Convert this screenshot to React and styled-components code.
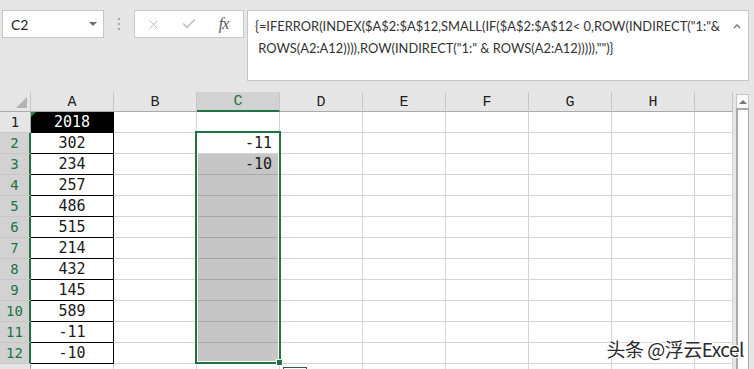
import React from "react"
import styled, { createGlobalStyle } from "styled-components"
import { X, Check } from "lucide-react"

const green = "#217346"

const GlobalStyle = createGlobalStyle`
  html, body {
    margin: 0;
    padding: 0;
    background: #e6e6e6;
    overflow: hidden;
  }
`

const Page = styled.div`
  position: relative;
  width: 754px;
  height: 369px;
  overflow: hidden;
  background: #e6e6e6;
  font-family: "Liberation Sans", sans-serif;
`

// ---- formula bar ----

const FormulaBar = styled.div`
  display: flex;
  align-items: flex-start;
  height: 92px;
  padding: 10px 5px 0 2px;
  box-sizing: border-box;
`

const NameBox = styled.div`
  flex-shrink: 0;
  width: 102px;
  height: 28px;
  box-sizing: border-box;
  border: 1px solid #c6c6c6;
  background: #fff;
  display: flex;
  align-items: center;
  justify-content: space-between;
  padding: 0 6px 0 8px;
  font: 14px Lato, sans-serif;
  color: #222;
`

const DropArrow = styled.span`
  width: 0;
  height: 0;
  border-left: 4px solid transparent;
  border-right: 4px solid transparent;
  border-top: 4px solid #6d6d6d;
`

const Grip = styled.div`
  flex-shrink: 0;
  width: 30px;
  height: 28px;
  display: flex;
  flex-direction: column;
  align-items: center;
  justify-content: center;
  gap: 3px;
`

const Dot = styled.span`
  width: 2px;
  height: 2px;
  background: #a6a6a6;
`

const ButtonBox = styled.div`
  flex-shrink: 0;
  width: 110px;
  height: 28px;
  box-sizing: border-box;
  border: 1px solid #c6c6c6;
  background: #fff;
  display: flex;
  align-items: center;
  padding-left: 1px;
`

const BarButton = styled.span`
  width: 35px;
  display: flex;
  align-items: center;
  justify-content: center;
  color: ${p => p.$color || "#b4b4b4"};
`

const Fx = styled.span`
  font: italic 16px "Liberation Serif", serif;
  color: #555;
  letter-spacing: -1px;
`

const FormulaBox = styled.div`
  margin-left: 3px;
  flex: 1;
  min-width: 0;
  height: 71px;
  box-sizing: border-box;
  border: 1px solid #c6c6c6;
  background: #fff;
  display: flex;
  padding: 4px 7px 0 7px;
`

const FormulaText = styled.div`
  flex: 1;
  min-width: 0;
  font: 12.9px Lato, sans-serif;
  color: #333;
  line-height: 22px;
`

const FormulaLine = styled.div`
  white-space: pre;
`

const Collapse = styled.span`
  padding-top: 8px;
  color: #777;
  display: flex;
`

// ---- sheet ----

const Sheet = styled.div`
  display: flex;
`

const Grid = styled.div`
  position: relative;
  flex-shrink: 0;
  display: grid;
  grid-template-columns: 31px repeat(8, 83px) 38px;
  grid-template-rows: 20px repeat(13, 21px);
  background: #fff;
`

const Corner = styled.div`
  background: #e6e6e6;
  border-right: 1px solid #c6c6c6;
  border-bottom: 1px solid #ababab;
  position: relative;

  &::after {
    content: "";
    position: absolute;
    right: 3px;
    bottom: 3px;
    border-left: 11px solid transparent;
    border-bottom: 11px solid #b4b4b4;
  }
`

const ColHead = styled.div`
  display: flex;
  align-items: center;
  justify-content: center;
  background: ${p => (p.$active ? "#d2d2d2" : "#e6e6e6")};
  color: ${p => (p.$active ? green : "#222")};
  border-right: 1px solid #c6c6c6;
  border-bottom: ${p => (p.$active ? `2px solid ${green}` : "1px solid #ababab")};
  font: 15px "Liberation Mono", monospace;
  padding-top: 1px;
`

const RowHead = styled.div`
  display: flex;
  align-items: center;
  justify-content: center;
  background: ${p => (p.$active ? "#d2d2d2" : "#e6e6e6")};
  color: ${p => (p.$active ? green : "#222")};
  border-right: ${p => (p.$active ? `2px solid ${green}` : "1px solid #ababab")};
  border-bottom: 1px solid #c6c6c6;
  font: 14px "DejaVu Sans Mono", monospace;
`

const Cell = styled.div`
  position: relative;
  display: flex;
  align-items: center;
  justify-content: ${p => (p.$right ? "flex-end" : "center")};
  padding-right: ${p => (p.$right ? "7px" : "0")};
  background: ${p => (p.$dark ? "#000" : p.$sel ? "#c6c6c6" : "#fff")};
  color: ${p => (p.$dark ? "#fff" : "#1a1a1a")};
  border-right: 1px solid ${p => (p.$boxed ? "#000" : "#d4d4d4")};
  border-bottom: 1px solid ${p => (p.$boxed ? "#000" : p.$sel ? "#a6a6a6" : "#d4d4d4")};
  font: 15px "DejaVu Sans Mono", monospace;

  ${p =>
    p.$flag &&
    `&::before {
      content: "";
      position: absolute;
      left: 0;
      top: 0;
      border-top: 5px solid #1f8a4c;
      border-right: 5px solid transparent;
    }`}
`

const Selection = styled.div`
  position: absolute;
  left: 195px;
  top: 39px;
  width: 86px;
  height: 233px;
  box-sizing: border-box;
  border: 2px solid ${green};
  box-shadow: inset 0 0 0 1px #fff;
  pointer-events: none;
`

const FillHandle = styled.div`
  position: absolute;
  left: 276px;
  top: 267px;
  width: 7px;
  height: 7px;
  box-sizing: border-box;
  background: ${green};
  border: 1px solid #fff;
`

const PasteTag = styled.div`
  position: absolute;
  left: 283px;
  top: 275px;
  width: 24px;
  height: 12px;
  box-sizing: border-box;
  border: 1px solid #2d5f44;
  background: #fff;
`

const ScrollBar = styled.div`
  flex-shrink: 0;
  width: 21px;
  padding: 2px 4px 0 3px;
  box-sizing: border-box;
  display: flex;
  flex-direction: column;
  border-left: 1px solid #ababab;
  margin-left: -1px;
`

const ArrowBtn = styled.div`
  height: 14px;
  box-sizing: border-box;
  border: 1px solid #c6c6c6;
  border-bottom: none;
  background: #fafafa;
  display: flex;
  align-items: center;
  justify-content: center;

  &::after {
    content: "";
    border-left: 4px solid transparent;
    border-right: 4px solid transparent;
    border-bottom: 4px solid #777;
  }
`

const Thumb = styled.div`
  height: 300px;
  box-sizing: border-box;
  border: 1px solid #ababab;
  border-top: 2px solid #ababab;
  border-left: 2px solid #ababab;
  background: #fff;
`

const Watermark = styled.div`
  position: absolute;
  right: 10px;
  top: 335px;
  font: 19px "Noto Sans CJK SC", sans-serif;
  color: #2b2b2b;
  letter-spacing: -0.5px;
  text-shadow: 1px 1px 0 #fff, -1px -1px 0 #fff, 1px -1px 0 #fff, -1px 1px 0 #fff;
`

const columns = ["A", "B", "C", "D", "E", "F", "G", "H", ""]
const colA = [2018, 302, 234, 257, 486, 515, 214, 432, 145, 589, -11, -10]
const colC = { 2: -11, 3: -10 }

function Row({ r }) {
  const active = r >= 2 && r <= 12
  return (
    <>
      <RowHead $active={active}>{r <= 12 ? r : ""}</RowHead>
      {columns.map((c, i) => {
        const boxed = c === "A" && r <= 12
        const sel = c === "C" && r >= 3 && r <= 12
        let value = ""
        if (c === "A" && r <= 12) value = colA[r - 1]
        if (c === "C" && colC[r] !== undefined) value = colC[r]
        return (
          <Cell
            key={i}
            $boxed={boxed}
            $sel={sel}
            $dark={c === "A" && r === 1}
            $flag={c === "A" && r === 1}
            $right={c === "C"}
          >
            {value}
          </Cell>
        )
      })}
    </>
  )
}

export default function App() {
  const rows = Array.from({ length: 13 }, (_, i) => i + 1)
  return (
    <Page>
      <GlobalStyle />
      <FormulaBar>
        <NameBox>
          <span>C2</span>
          <DropArrow />
        </NameBox>
        <Grip>
          <Dot />
          <Dot />
          <Dot />
        </Grip>
        <ButtonBox>
          <BarButton>
            <X size={15} strokeWidth={1.4} />
          </BarButton>
          <BarButton $color="#c4c4c4">
            <Check size={16} strokeWidth={2.6} />
          </BarButton>
          <BarButton>
            <Fx>fx</Fx>
          </BarButton>
        </ButtonBox>
        <FormulaBox>
          <FormulaText>
            <FormulaLine>{'{=IFERROR(INDEX($A$2:$A$12,SMALL(IF($A$2:$A$12< 0,ROW(INDIRECT("1:"&'}</FormulaLine>
            <FormulaLine>{' ROWS(A2:A12)))),ROW(INDIRECT("1:" & ROWS(A2:A12))))),"")}'}</FormulaLine>
          </FormulaText>
          <Collapse>
            <svg width="8" height="6" viewBox="0 0 8 6">
              <path d="M1 5 L4 2 L7 5" fill="none" stroke="#777" strokeWidth="1.4" />
            </svg>
          </Collapse>
        </FormulaBox>
      </FormulaBar>

      <Sheet>
        <Grid>
          <Corner />
          {columns.map((c, i) => (
            <ColHead key={i} $active={c === "C"}>{c}</ColHead>
          ))}
          {rows.map(r => (
            <Row key={r} r={r} />
          ))}
          <Selection />
          <FillHandle />
          <PasteTag />
        </Grid>
        <ScrollBar>
          <ArrowBtn />
          <Thumb />
        </ScrollBar>
      </Sheet>

      <Watermark>头条 @浮云Excel</Watermark>
    </Page>
  )
}
